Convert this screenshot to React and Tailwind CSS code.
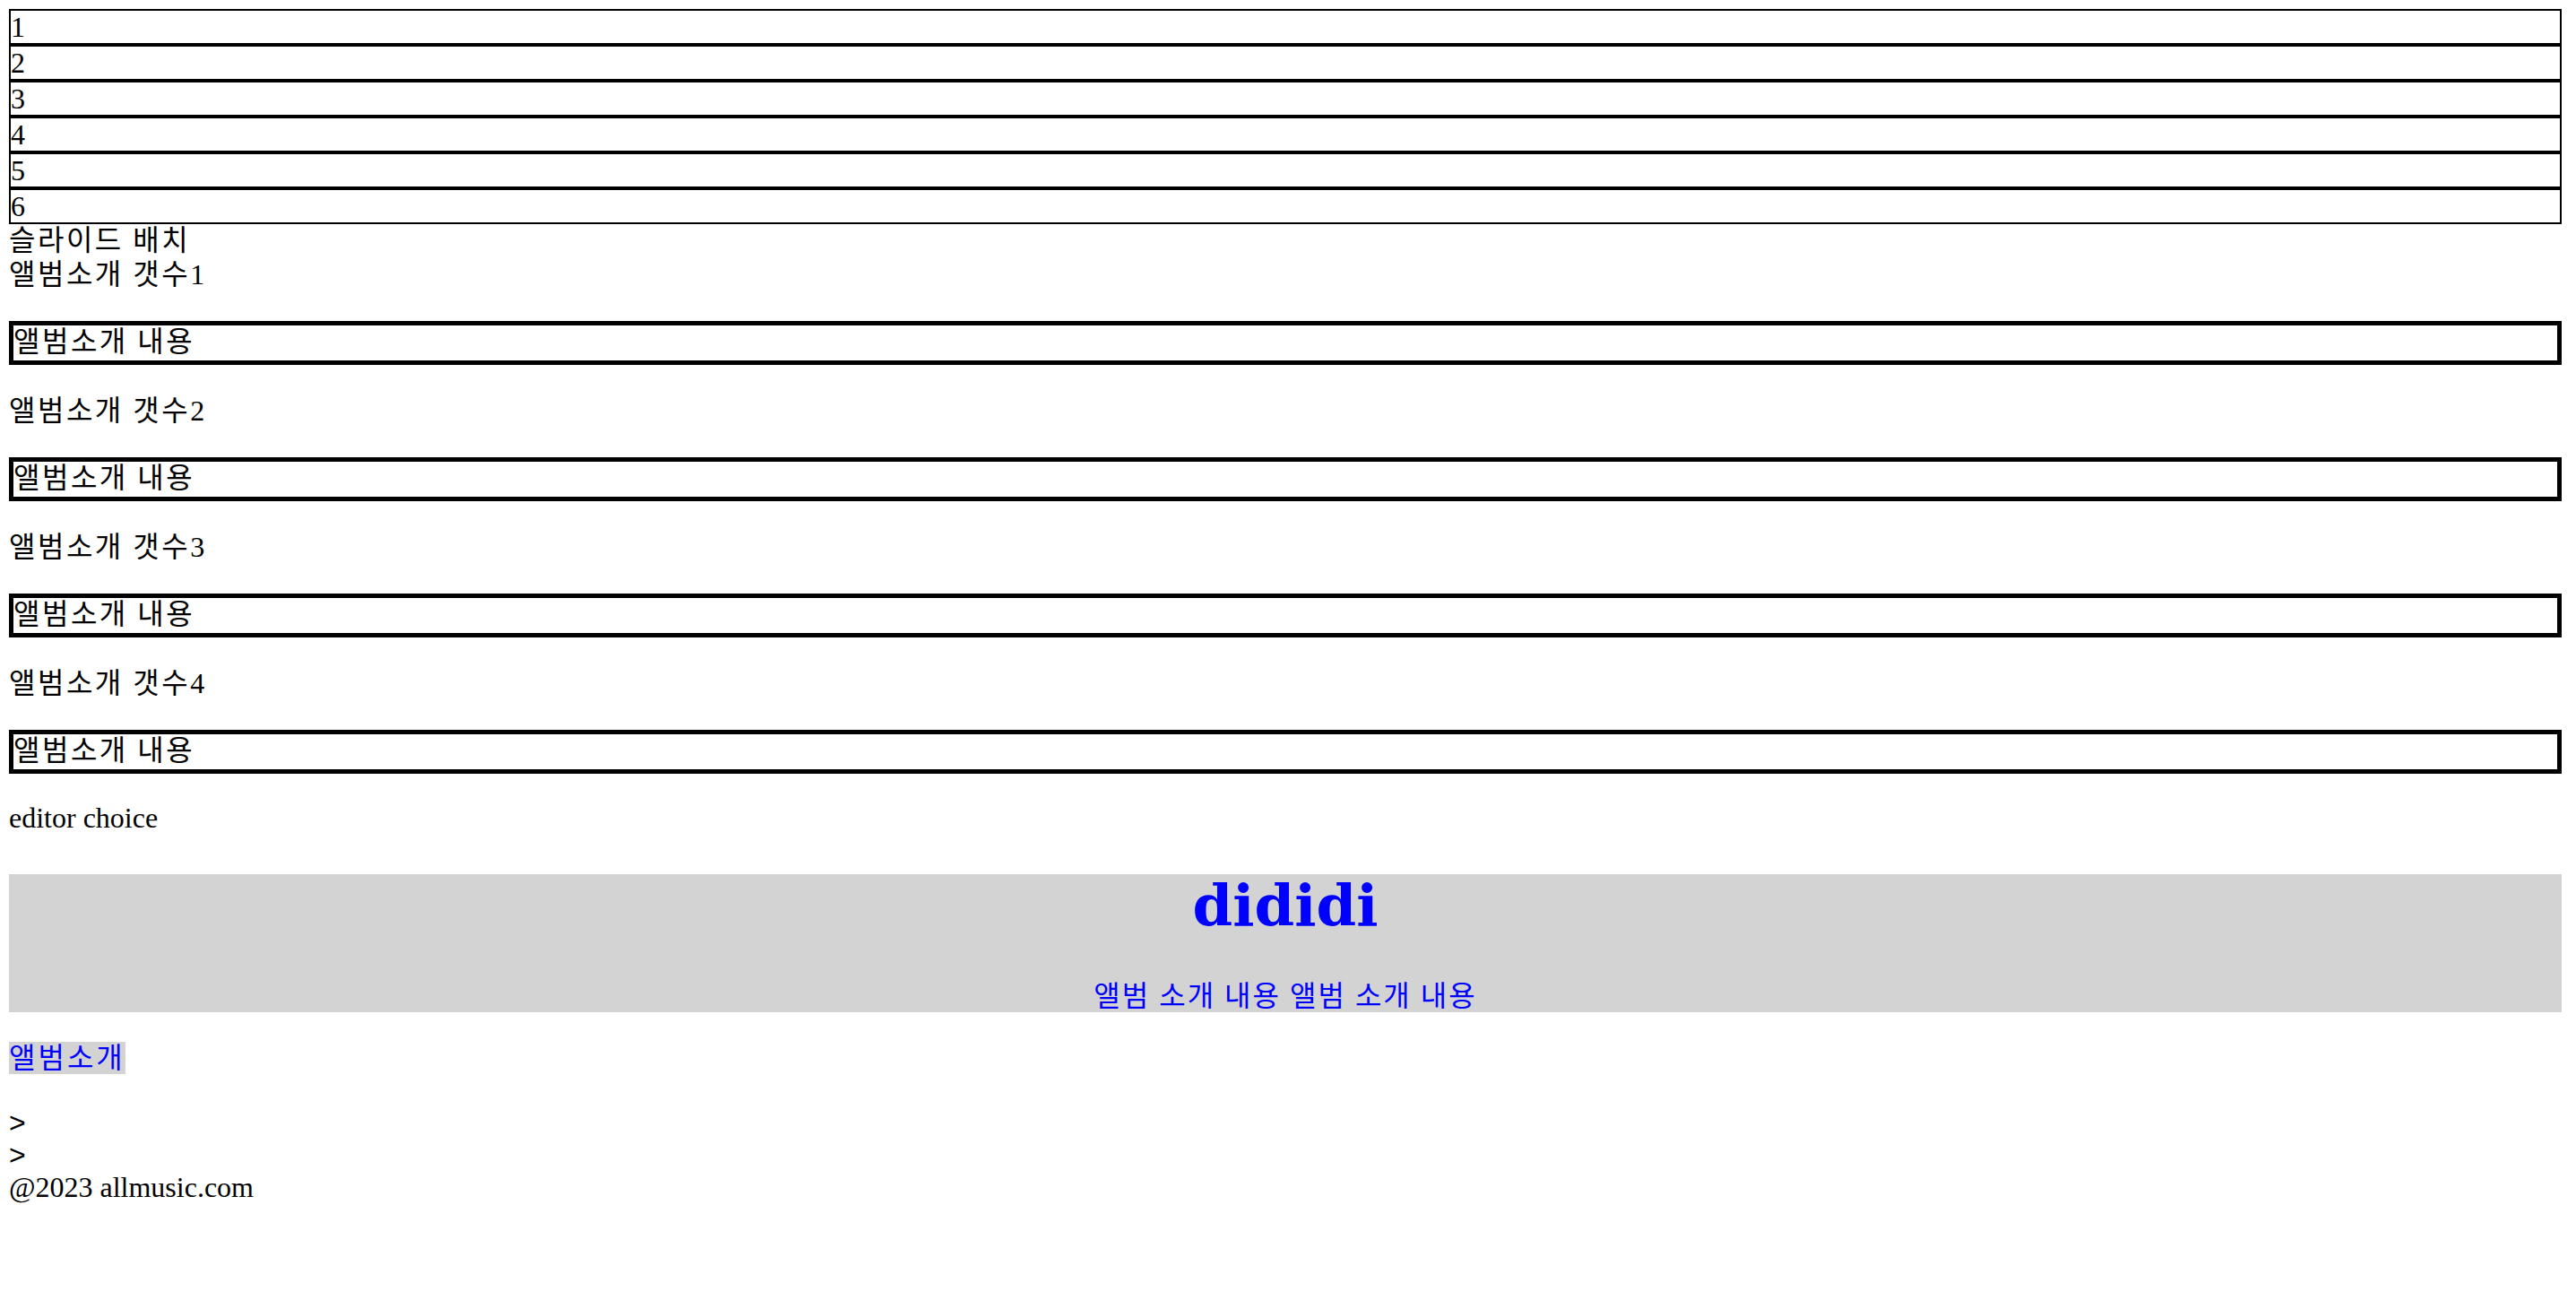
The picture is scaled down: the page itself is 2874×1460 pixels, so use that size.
import React from 'react';

export default function App() {
  const slides = ['1', '2', '3', '4', '5', '6'];
  const albums = [1, 2, 3, 4];

  return (
    <div className="min-h-[1460px] bg-white pt-[10px] text-black font-['Liberation_Serif','Noto_Sans_CJK_KR',serif] text-[32px] leading-[36px]">
      <div className="ml-[10px] w-[2848px]">
        {/* slide list */}
        <div>
          {slides.map((n) => (
            <div key={n} className="h-[40px] border-2 border-black">
              {n}
            </div>
          ))}
        </div>
        <div className="h-[38px] tracking-[2.5px]">슬라이드 배치</div>

        {/* album intro */}
        {albums.map((n) => (
          <div key={n}>
            <p className={n === 1 ? 'mb-[34px]' : 'mt-[33px] mb-[34px]'}>
              <span className="tracking-[2.5px]">앨범소개 갯수</span>
              {n}
            </p>
            <div className="h-[49px] border-[5px] border-black pb-[3px] tracking-[2.5px]">앨범소개 내용</div>
          </div>
        ))}

        <p className="mt-[31px]">editor choice</p>

        <div className="mt-[45px] bg-[#d3d3d3] text-center text-[#0000ff]">
          <h1 className="mb-[48px] font-['DejaVu_Serif',serif] text-[64px] leading-[70px] font-bold">dididi</h1>
          <p className="tracking-[2px]">앨범 소개 내용 앨범 소개 내용</p>
        </div>

        <div className="mt-[33px]">
          <span className="inline-block h-[36px] bg-[#d3d3d3] text-[#0000ff] tracking-[3px]">앨범소개</span>
        </div>

        <div className="mt-[36px] font-['Liberation_Sans',sans-serif]">&gt;</div>
        <div className="font-['Liberation_Sans',sans-serif]">&gt;</div>
        <div>@2023 allmusic.com</div>
      </div>
    </div>
  );
}
